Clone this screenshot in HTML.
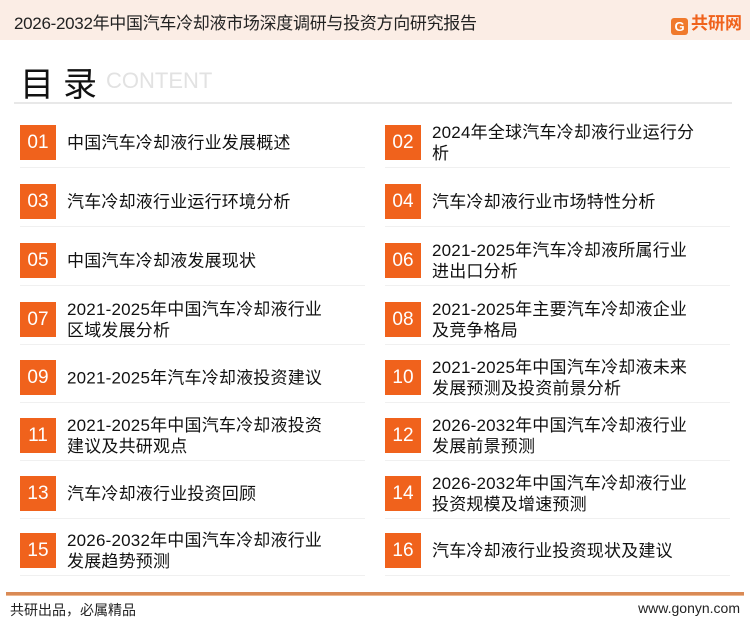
<!DOCTYPE html><html><head><meta charset="utf-8"><style>
body{margin:0;width:750px;height:622px;position:relative;background:#fff;font-family:"Liberation Sans","Noto Sans CJK SC",sans-serif;overflow:hidden}
.hd{position:absolute;left:0;top:0;width:750px;height:40px;background:#fbede5}
.hd .t{position:absolute;left:14px;top:9px;font-size:17px;color:#222;letter-spacing:-0.3px}
.logo{position:absolute;right:8px;top:9px;font-size:17px;font-weight:bold;color:#f0621c}
.logo span{display:inline-block;width:17px;height:17px;background:#f07a2c;color:#fff;font-size:13px;text-align:center;line-height:17px;border-radius:3px;margin-right:3px;vertical-align:-2px}
.ml{position:absolute;left:20px;top:57px;font-size:34px;color:#111;letter-spacing:9px}
.ct{position:absolute;left:106px;top:68px;font-size:22px;color:#e2e2e2}
.hr{position:absolute;left:14px;top:102px;width:718px;height:2px;background:#e8e8e8}
.it{position:absolute;width:345px;height:35px}
.it b{position:absolute;left:0;top:0;width:36px;height:35px;background:#f0621c;color:#fff;font-weight:normal;font-size:19px;line-height:35px;text-align:center}
.it p{position:absolute;left:47px;top:50%;transform:translateY(-50%);margin:0;font-size:17px;line-height:21px;color:#111;white-space:nowrap;letter-spacing:0.2px}
.it:after{content:"";position:absolute;left:0;right:0;bottom:-8px;height:1px;background:#f0f0f0}
.fl{position:absolute;left:6px;top:592px;width:738px;height:3px;background:#d98a55;border-bottom:1px solid #eeb890}
.f1{position:absolute;left:10px;top:600px;font-size:14px;color:#222}
.f2{position:absolute;right:10px;top:600px;font-size:14px;color:#222}
</style></head><body>
<div class="hd"><div class="t">2026-2032年中国汽车冷却液市场深度调研与投资方向研究报告</div><div class="logo"><span>G</span>共研网</div></div>
<div class="ml">目录</div><div class="ct">CONTENT</div><div class="hr"></div>
<div class="it" style="left:20px;top:125px"><b>01</b><p>中国汽车冷却液行业发展概述</p></div>
<div class="it" style="left:385px;top:125px"><b>02</b><p>2024年全球汽车冷却液行业运行分<br>析</p></div>
<div class="it" style="left:20px;top:184px"><b>03</b><p>汽车冷却液行业运行环境分析</p></div>
<div class="it" style="left:385px;top:184px"><b>04</b><p>汽车冷却液行业市场特性分析</p></div>
<div class="it" style="left:20px;top:243px"><b>05</b><p>中国汽车冷却液发展现状</p></div>
<div class="it" style="left:385px;top:243px"><b>06</b><p>2021-2025年汽车冷却液所属行业<br>进出口分析</p></div>
<div class="it" style="left:20px;top:302px"><b>07</b><p>2021-2025年中国汽车冷却液行业<br>区域发展分析</p></div>
<div class="it" style="left:385px;top:302px"><b>08</b><p>2021-2025年主要汽车冷却液企业<br>及竞争格局</p></div>
<div class="it" style="left:20px;top:360px"><b>09</b><p>2021-2025年汽车冷却液投资建议</p></div>
<div class="it" style="left:385px;top:360px"><b>10</b><p>2021-2025年中国汽车冷却液未来<br>发展预测及投资前景分析</p></div>
<div class="it" style="left:20px;top:418px"><b>11</b><p>2021-2025年中国汽车冷却液投资<br>建议及共研观点</p></div>
<div class="it" style="left:385px;top:418px"><b>12</b><p>2026-2032年中国汽车冷却液行业<br>发展前景预测</p></div>
<div class="it" style="left:20px;top:476px"><b>13</b><p>汽车冷却液行业投资回顾</p></div>
<div class="it" style="left:385px;top:476px"><b>14</b><p>2026-2032年中国汽车冷却液行业<br>投资规模及增速预测</p></div>
<div class="it" style="left:20px;top:533px"><b>15</b><p>2026-2032年中国汽车冷却液行业<br>发展趋势预测</p></div>
<div class="it" style="left:385px;top:533px"><b>16</b><p>汽车冷却液行业投资现状及建议</p></div>
<div class="fl"></div>
<div class="f1">共研出品，必属精品</div><div class="f2">www.gonyn.com</div>
</body></html>
